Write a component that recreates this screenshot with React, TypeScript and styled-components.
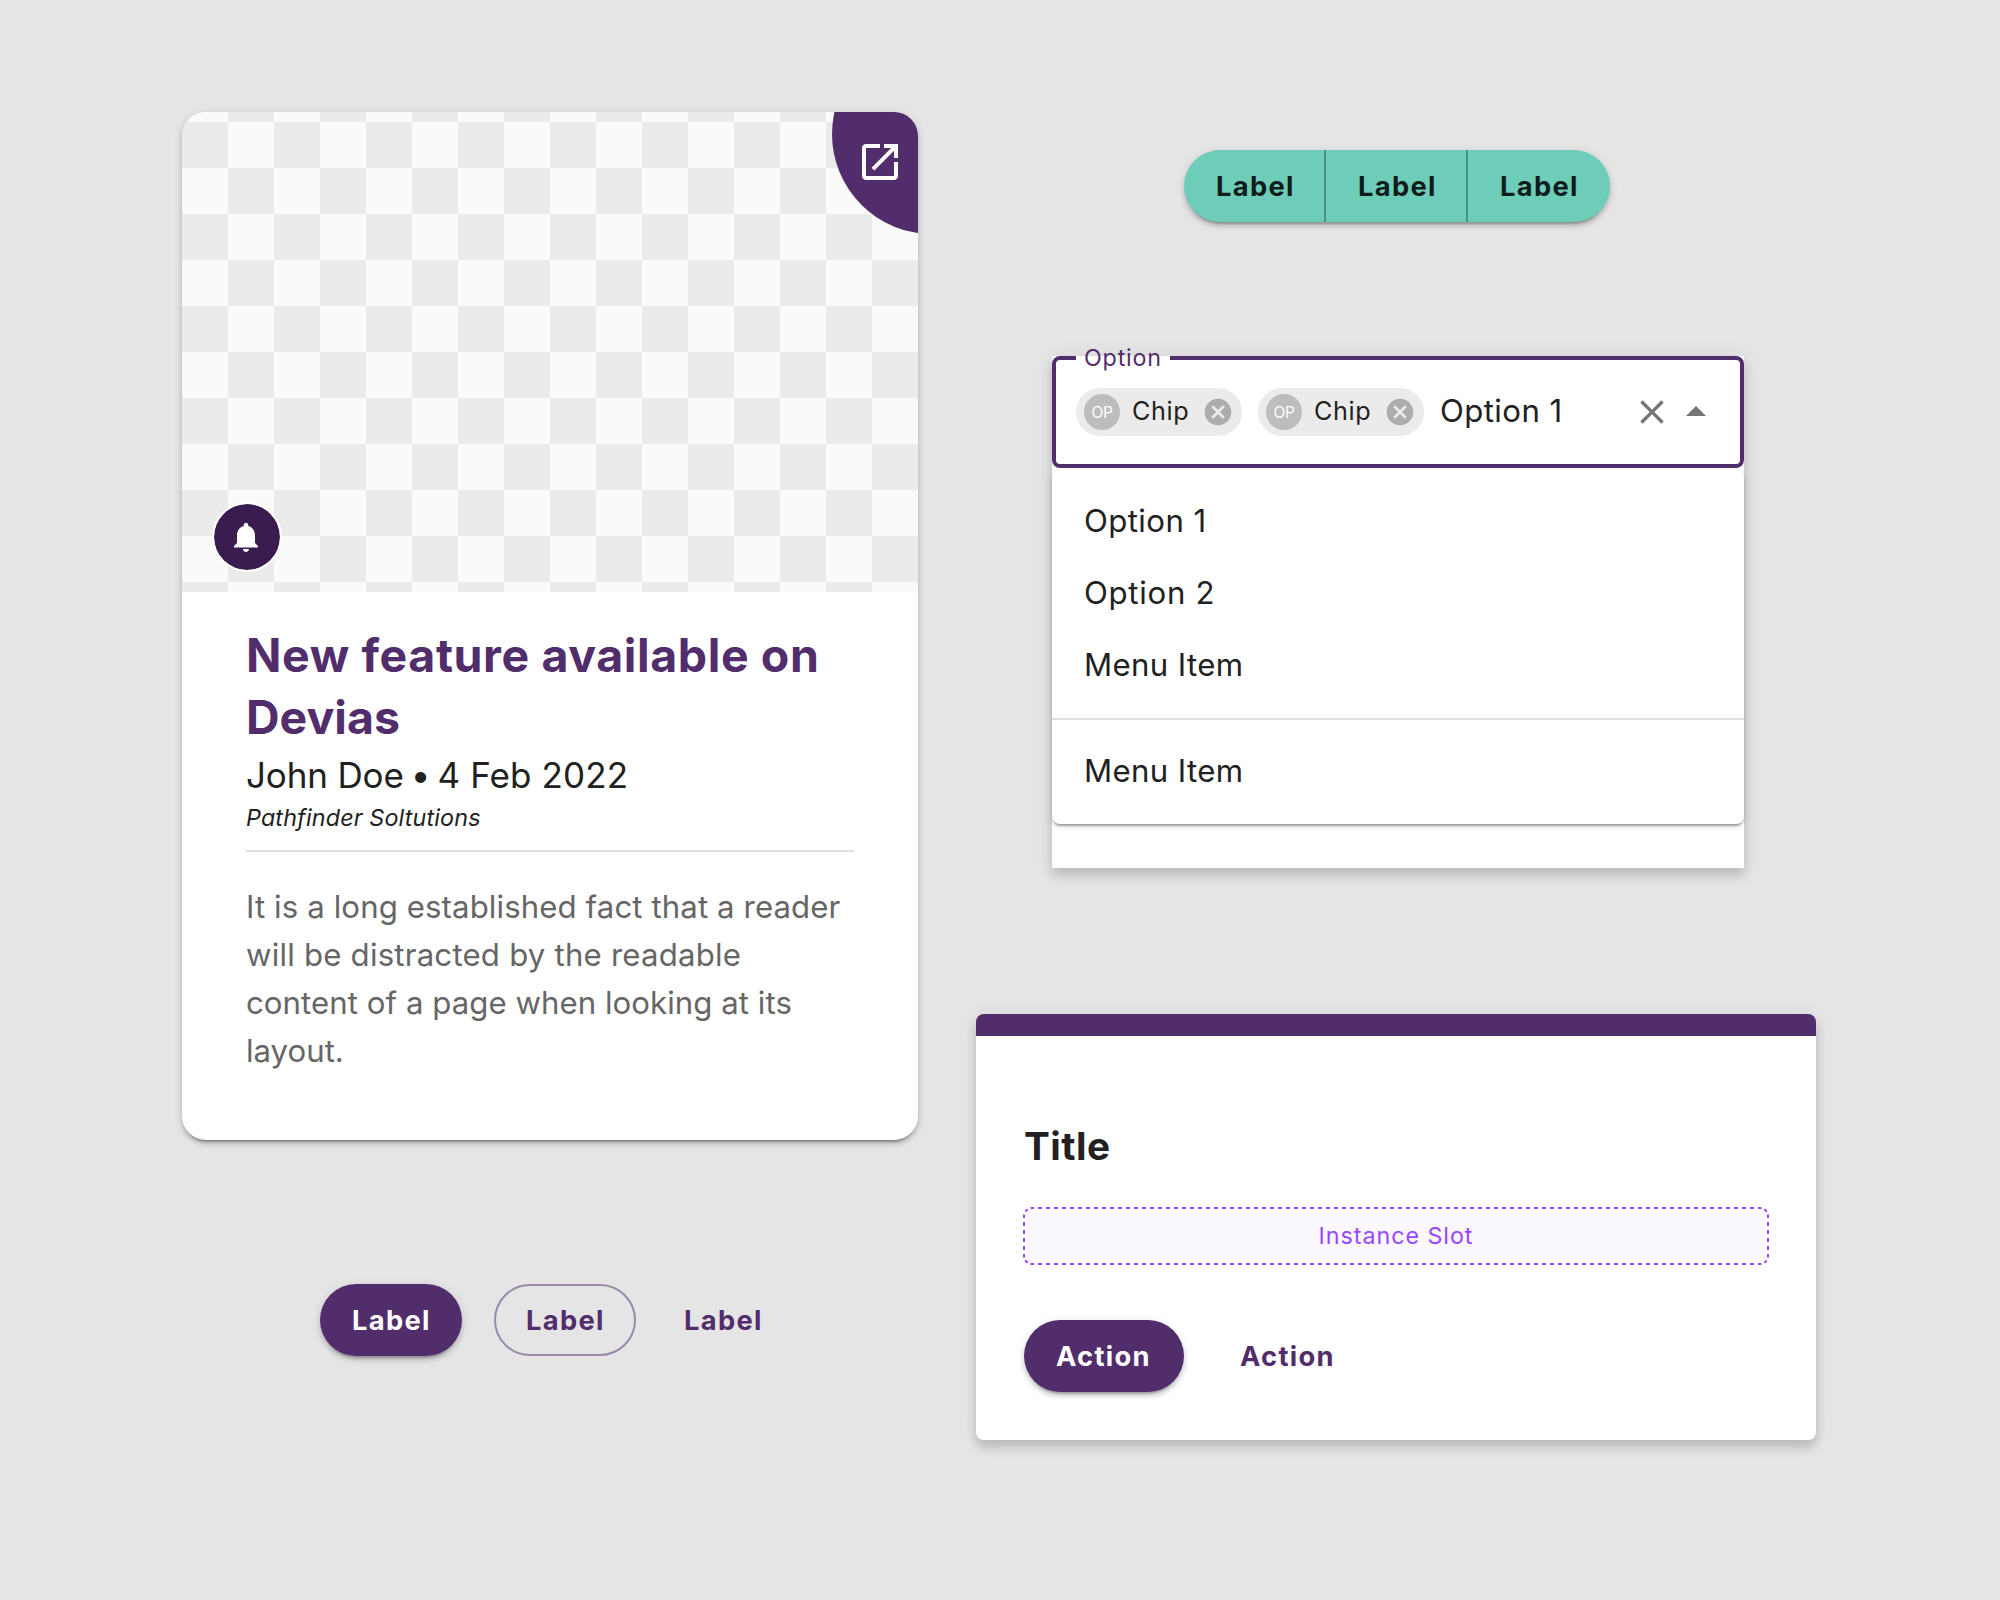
import React from "react";
import styled, { createGlobalStyle, css } from "styled-components";

const color = {
  primary: "#522d6c",
  primaryDark: "#3a1c50",
  text: "#212121",
  textSecondary: "#666666",
  divider: "#e0e0e0",
  teal: "#6ecdb9",
  slot: "#9747ff",
};

const elevation = {
  low: "0 4px 2px -2px rgba(0,0,0,.2), 0 2px 2px rgba(0,0,0,.14), 0 2px 6px rgba(0,0,0,.12)",
  mid: "0 6px 2px -4px rgba(0,0,0,.2), 0 4px 4px rgba(0,0,0,.14), 0 2px 10px rgba(0,0,0,.12)",
  high: "0 8px 10px rgba(0,0,0,.14), 0 2px 20px rgba(0,0,0,.08)",
};

const GlobalStyle = createGlobalStyle`
  *, *::before, *::after { box-sizing: border-box; }
  body {
    margin: 0;
    background: #e5e5e5;
    color: ${color.text};
    font-family: Inter, "Liberation Sans", sans-serif;
  }
`;

const Page = styled.main`
  display: flex;
  gap: 58px;
  width: 2000px;
  height: 1600px;
  padding-left: 182px;
  background: #e5e5e5;
`;

const LeftColumn = styled.section`
  display: flex;
  flex-direction: column;
  width: 736px;
  padding-top: 112px;
`;

const RightColumn = styled.section`
  display: flex;
  flex-direction: column;
  width: 840px;
  padding-top: 150px;
`;

/* Feature card */

const Card = styled.article`
  height: 1028px;
  border-radius: 24px;
  background: #fff;
  box-shadow: ${elevation.mid}, 0 2px 1px -1px rgba(0, 0, 0, 0.12);
`;

const CardMedia = styled.div`
  position: relative;
  height: 480px;
  overflow: hidden;
  border-radius: 24px 24px 0 0;
  background: repeating-conic-gradient(#fafafa 0 25%, #ebebeb 0 50%) 0 10px / 92px 92px;
`;

const CornerLink = styled.a`
  position: absolute;
  top: -78px;
  left: 650px;
  width: 200px;
  height: 200px;
  padding: 104px 0 0 24px;
  border-radius: 50%;
  background: ${color.primary};
  color: #fff;
`;

const BellBadge = styled.div`
  position: absolute;
  left: 30px;
  top: 390px;
  display: flex;
  width: 70px;
  height: 70px;
  padding: 15.25px 0 0 14px;
  border: 2px solid #fff;
  border-radius: 50%;
  background: ${color.primaryDark};
  background-clip: padding-box;
  color: #fff;
`;

const Icon = styled.svg<{ $size: number }>`
  display: block;
  flex: none;
  width: ${(p) => p.$size}px;
  height: ${(p) => p.$size}px;
  fill: currentColor;
`;

const CardBody = styled.div`
  padding: 32px 64px 0;
`;

const Line = styled.span<{ $spacing: number }>`
  display: block;
  white-space: nowrap;
  letter-spacing: ${(p) => p.$spacing}px;
`;

const CardTitle = styled.h2`
  margin: 0;
  font-size: 46.5px;
  font-weight: 700;
  line-height: 62px;
  color: ${color.primary};
`;

const CardMeta = styled.p`
  margin: 0;
  font-size: 35px;
  line-height: 54px;
  letter-spacing: -0.15px;
  white-space: nowrap;
`;

const Bullet = styled.span`
  margin: 0 -2.5px;
`;

const MetaDate = styled.span`
  letter-spacing: 0.1px;
`;

const CardCompany = styled.p`
  margin: 0;
  font-size: 23.3px;
  font-style: italic;
  line-height: 31px;
  letter-spacing: 0.16px;
`;

const CardRule = styled.hr`
  height: 2px;
  margin: 17px 0 31px;
  border: 0;
  background: ${color.divider};
`;

const CardText = styled.p`
  margin: 0;
  font-size: 31.2px;
  line-height: 48px;
  color: ${color.textSecondary};
`;

/* Buttons */

type Variant = "contained" | "outlined" | "text";

const buttonLabel = css`
  font: 700 27.3px/33px Inter, "Liberation Sans", sans-serif;
  letter-spacing: 1.3px;
  text-align: left;
`;

const Button = styled.button<{ $variant: Variant; $width: number }>`
  display: flex;
  align-items: flex-start;
  width: ${(p) => p.$width}px;
  height: 72px;
  padding: 20px 0 0 32px;
  border: 0;
  border-radius: 36px;
  background: none;
  color: ${color.primary};
  ${buttonLabel}
  ${(p) =>
    p.$variant === "contained" &&
    css`
      background: ${color.primary};
      color: #fff;
      box-shadow: ${elevation.mid};
    `}
  ${(p) =>
    p.$variant === "outlined" &&
    css`
      padding: 18px 0 0 30px;
      border: 2px solid rgba(82, 45, 108, 0.5);
    `}
  ${(p) => p.$variant === "text" && "padding-left: 16px;"}
`;

const ButtonRow = styled.div`
  display: flex;
  gap: 32px;
  margin-top: 144px;
  padding-left: 138px;
`;

const ButtonGroup = styled.div`
  display: flex;
  width: 426px;
  height: 72px;
  margin-left: 208px;
  border-radius: 36px;
  background: ${color.teal};
  box-shadow: ${elevation.mid};
`;

const GroupButton = styled.button`
  display: flex;
  align-items: flex-start;
  width: 142px;
  height: 72px;
  padding: 20px 0 0 32px;
  border: 0;
  background: none;
  color: #0e1d1a;
  ${buttonLabel}

  &:not(:last-child) {
    border-right: 2px solid #449482;
  }
`;

/* Autocomplete */

const Autocomplete = styled.div`
  width: 692px;
  height: 512px;
  margin: 134px 0 0 76px;
  background: #fff;
  box-shadow: ${elevation.high};
`;

const Field = styled.div`
  position: relative;
  display: flex;
  height: 112px;
  padding: 28px 20px 0;
  border: 4px solid ${color.primary};
  border-radius: 8px;
`;

const FieldLabel = styled.label`
  position: absolute;
  top: -17px;
  left: 20px;
  width: 94px;
  padding-left: 8px;
  background: linear-gradient(#fff, #fff) 0 13px / 100% 4px no-repeat;
  color: ${color.primary};
  font-size: 23.3px;
  line-height: 29px;
  letter-spacing: 0.8px;
`;

const Chip = styled.span`
  display: flex;
  align-items: center;
  width: 166px;
  height: 48px;
  margin-right: 16px;
  padding: 0 8px;
  border-radius: 24px;
  background: #ebebeb;
`;

const ChipAvatar = styled.span`
  width: 36px;
  height: 36px;
  margin-right: 12px;
  padding-top: 9px;
  border-radius: 50%;
  background: #bdbdbd;
  color: #fff;
  font-size: 15.5px;
  line-height: 19px;
  letter-spacing: -0.4px;
  text-align: center;
`;

const ChipText = styled.span`
  padding-bottom: 2px;
  font-size: 25.2px;
  line-height: 46px;
  letter-spacing: 0.65px;
`;

const ChipRemove = styled(Icon)`
  margin-left: auto;
  color: #adadad;
`;

const FieldValue = styled.span`
  flex: 1;
  font-size: 31.2px;
  line-height: 46px;
  letter-spacing: 0.4px;
`;

const FieldActions = styled.div`
  display: flex;
  align-items: center;
  height: 48px;
  color: #757575;
`;

const Menu = styled.ul`
  height: 354px;
  margin: 2px 0 0;
  padding: 16px 0;
  border-radius: 8px;
  background: #fff;
  box-shadow: ${elevation.low};
  list-style: none;
`;

const MenuItem = styled.li<{ $spacing: number }>`
  height: 72px;
  padding: 0 32px 2px;
  font-size: 31.2px;
  line-height: 70px;
  letter-spacing: ${(p) => p.$spacing}px;
`;

const MenuDivider = styled.li`
  height: 2px;
  margin: 16px 0;
  background: ${color.divider};
`;

/* Dialog */

const Dialog = styled.div`
  height: 426px;
  margin-top: 146px;
  padding: 104px 48px 0;
  border-radius: 8px;
  background: linear-gradient(${color.primary}, ${color.primary}) 0 0 / 100% 22px no-repeat, #fff;
  box-shadow: ${elevation.high};
`;

const DialogTitle = styled.h3`
  margin: 0;
  font-size: 38.7px;
  font-weight: 700;
  line-height: 56px;
  letter-spacing: 0.5px;
`;

const Slot = styled.div`
  position: relative;
  height: 56px;
  margin-top: 34px;
  padding-top: 13px;
  border-radius: 8px;
  background: #fbf8ff;
  color: ${color.slot};
  font-size: 23.3px;
  line-height: 29px;
  letter-spacing: 0.95px;
  text-align: center;
`;

const SlotOutline = styled.svg`
  position: absolute;
  top: -1px;
  left: -1px;
  width: 746px;
  height: 58px;
  fill: none;
  stroke: ${color.slot};
  stroke-width: 2;
`;

const DialogActions = styled.div`
  display: flex;
  gap: 40px;
  margin-top: 56px;
`;

const titleLines: [string, number][] = [
  ["New feature available on", 0.6],
  ["Devias", 0],
];

const textLines: [string, number][] = [
  ["It is a long established fact that a reader", 0.1],
  ["will be distracted by the readable", 0.2],
  ["content of a page when looking at its", 0.04],
  ["layout.", 0],
];

function OptionChip() {
  return (
    <Chip>
      <ChipAvatar>OP</ChipAvatar>
      <ChipText>Chip</ChipText>
      <ChipRemove $size={32} viewBox="0 0 24 24">
        <path d="M12 2C6.47 2 2 6.47 2 12s4.47 10 10 10 10-4.47 10-10S17.53 2 12 2zm5 13.59L15.59 17 12 13.41 8.41 17 7 15.59 10.59 12 7 8.41 8.41 7 12 10.59 15.59 7 17 8.41 13.41 12 17 15.59z" />
      </ChipRemove>
    </Chip>
  );
}

export default function App() {
  return (
    <>
      <GlobalStyle />
      <Page>
        <LeftColumn>
          <Card>
            <CardMedia>
              <CornerLink>
                <Icon $size={48} viewBox="0 0 24 24">
                  <path d="M19 19H5V5h7V3H5c-1.11 0-2 .9-2 2v14c0 1.1.89 2 2 2h14c1.1 0 2-.9 2-2v-7h-2v7zM14 3v2h3.59l-9.83 9.83 1.41 1.41L19 6.41V10h2V3h-7z" />
                </Icon>
              </CornerLink>
              <BellBadge>
                <Icon $size={36} viewBox="0 0 24 24">
                  <path d="M12 22c1.1 0 2-.9 2-2h-4c0 1.1.89 2 2 2zm6-6v-5c0-3.07-1.64-5.64-4.5-6.32V4c0-.83-.67-1.5-1.5-1.5s-1.5.67-1.5 1.5v.68C7.63 5.36 6 7.92 6 11v5l-2 2v1h16v-1l-2-2z" />
                </Icon>
              </BellBadge>
            </CardMedia>
            <CardBody>
              <CardTitle>
                {titleLines.map(([text, spacing]) => (
                  <Line key={text} $spacing={spacing}>{text}</Line>
                ))}
              </CardTitle>
              <CardMeta>
                John Doe <Bullet>•</Bullet> <MetaDate>4 Feb 2022</MetaDate>
              </CardMeta>
              <CardCompany>Pathfinder Soltutions</CardCompany>
              <CardRule />
              <CardText>
                {textLines.map(([text, spacing]) => (
                  <Line key={text} $spacing={spacing}>{text}</Line>
                ))}
              </CardText>
            </CardBody>
          </Card>
          <ButtonRow>
            <Button $variant="contained" $width={142}>Label</Button>
            <Button $variant="outlined" $width={142}>Label</Button>
            <Button $variant="text" $width={110}>Label</Button>
          </ButtonRow>
        </LeftColumn>

        <RightColumn>
          <ButtonGroup>
            <GroupButton>Label</GroupButton>
            <GroupButton>Label</GroupButton>
            <GroupButton>Label</GroupButton>
          </ButtonGroup>

          <Autocomplete>
            <Field>
              <FieldLabel>Option</FieldLabel>
              <OptionChip />
              <OptionChip />
              <FieldValue>Option 1</FieldValue>
              <FieldActions>
                <Icon $size={40} viewBox="0 0 24 24">
                  <path d="M19 6.41 17.59 5 12 10.59 6.41 5 5 6.41 10.59 12 5 17.59 6.41 19 12 13.41 17.59 19 19 17.59 13.41 12z" />
                </Icon>
                <Icon $size={48} viewBox="0 0 24 24">
                  <path d="m7 14 5-5 5 5z" />
                </Icon>
              </FieldActions>
            </Field>
            <Menu>
              <MenuItem $spacing={0.4}>Option 1</MenuItem>
              <MenuItem $spacing={0.7}>Option 2</MenuItem>
              <MenuItem $spacing={0.35}>Menu Item</MenuItem>
              <MenuDivider />
              <MenuItem $spacing={0.35}>Menu Item</MenuItem>
            </Menu>
          </Autocomplete>

          <Dialog>
            <DialogTitle>Title</DialogTitle>
            <Slot>
              <SlotOutline viewBox="0 0 746 58">
                <path strokeDasharray="4 4" strokeDashoffset="2" d="M9 1H737M9 57H737M1 9V49M745 9V49" />
                <path
                  strokeDasharray="3.1416 3.1416"
                  strokeDashoffset="1.5708"
                  d="M1 9A8 8 0 0 1 9 1M737 1A8 8 0 0 1 745 9M745 49A8 8 0 0 1 737 57M9 57A8 8 0 0 1 1 49"
                />
              </SlotOutline>
              Instance Slot
            </Slot>
            <DialogActions>
              <Button $variant="contained" $width={160}>Action</Button>
              <Button $variant="text" $width={126}>Action</Button>
            </DialogActions>
          </Dialog>
        </RightColumn>
      </Page>
    </>
  );
}
